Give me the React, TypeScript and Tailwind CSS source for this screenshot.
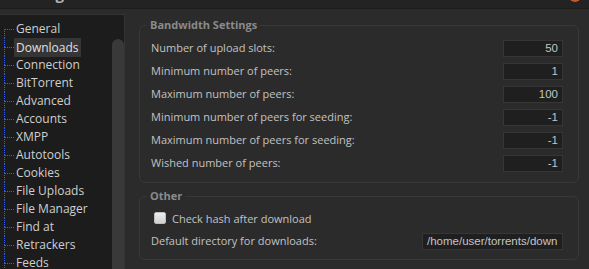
import React from 'react';

const MENU = [
  'General',
  'Downloads',
  'Connection',
  'BitTorrent',
  'Advanced',
  'Accounts',
  'XMPP',
  'Autotools',
  'Cookies',
  'File Uploads',
  'File Manager',
  'Find at',
  'Retrackers',
  'Feeds',
];

const BANDWIDTH = [
  { label: 'Number of upload slots:', value: '50' },
  { label: 'Minimum number of peers:', value: '1' },
  { label: 'Maximum number of peers:', value: '100' },
  { label: 'Minimum number of peers for seeding:', value: '-1' },
  { label: 'Maximum number of peers for seeding:', value: '-1' },
  { label: 'Wished number of peers:', value: '-1' },
];

const Field: React.FC<{ value: string; wide?: boolean }> = ({ value, wide }) => (
  <div
    className={
      wide
        ? "w-[141px] h-[17px] bg-[#1f1f1f] border border-[#363636] px-[4px] text-left overflow-hidden whitespace-nowrap leading-[15px] text-[11.5px] font-['Liberation_Sans',sans-serif] text-[#c4c4c4]"
        : "w-[60px] h-[17px] bg-[#1f1f1f] border border-[#363636] px-[4px] text-right overflow-hidden whitespace-nowrap leading-[15px] text-[11.5px] font-['Liberation_Sans',sans-serif] text-[#c4c4c4]"
    }
  >
    {value}
  </div>
);

const App: React.FC = () => {
  return (
    <div className="w-[589px] h-[269px] overflow-hidden bg-[#2b2b2b] font-['Open_Sans',sans-serif] flex flex-col">
      {/* Window title, mostly scrolled off */}
      <div className="h-[9px] shrink-0 bg-[#232323] border-b border-[#1c1c1c] overflow-hidden flex justify-between px-[11px]">
        <span className="-mt-[14px] text-[15px] leading-[16px] font-bold text-[#b5b5b5]">Settings</span>
        <span className="-mt-[10px] mr-[-3px] w-[12px] h-[12px] rounded-full bg-[#c9592c]"></span>
      </div>

      <div className="flex flex-1 min-h-0">
        {/* Side menu */}
        <div className="mt-[5px] w-[125px] shrink-0 bg-[#1c1c1c] border-t border-r border-[#333] flex">
          <ul className="flex-1 pt-[5px]">
            {MENU.map((item, i) => (
              <li key={item} className="h-[18px] flex items-stretch">
                <div className="ml-[4px] w-[10px] flex flex-col">
                  <div className={i === 0 ? 'h-1/2' : 'h-1/2 border-l border-dotted border-[#3560d8]'}></div>
                  <div className="h-1/2 border-l border-t border-dotted border-[#3560d8]"></div>
                </div>
                <span
                  className={
                    i === 1
                      ? 'self-center -my-[1px] px-[2px] h-[19px] leading-[19px] bg-[#353535] text-[12px] text-[#e0e0e0]'
                      : 'self-center px-[2px] leading-[18px] text-[12px] text-[#cfcfcf]'
                  }
                >
                  {item}
                </span>
              </li>
            ))}
          </ul>
          <div className="w-[12px] pt-[24px] flex">
            <div className="flex-1 bg-[#393939] rounded-t-[6px]"></div>
          </div>
        </div>

        {/* Settings panel */}
        <div className="flex-1 pl-[14px] pr-[10px] pt-[8px] text-[11px] text-[#c2c2c2]">
          <fieldset className="border border-[#383838] rounded-[6px]">
            <legend className="ml-[7px] px-[3px] leading-[16px] font-bold text-[#8a8a8a]">Bandwidth Settings</legend>
            <div className="pl-[11px] pr-[15px] pt-[7px] pb-[10px] flex flex-col gap-[6px]">
              {BANDWIDTH.map(row => (
                <div key={row.label} className="h-[17px] flex items-center justify-between">
                  <span>{row.label}</span>
                  <Field value={row.value} />
                </div>
              ))}
            </div>
          </fieldset>

          <fieldset className="mt-[5px] border border-[#383838] rounded-[6px]">
            <legend className="ml-[7px] px-[3px] leading-[16px] font-bold text-[#8a8a8a]">Other</legend>
            <div className="pl-[11px] pr-[15px] pt-[5px] pb-[9px] flex flex-col gap-[7px]">
              <div className="h-[17px] flex items-center">
                <div className="ml-[3px] w-[12px] h-[12px] rounded-[2px] border border-[#bdbdbd] bg-gradient-to-b from-[#eeeeee] to-[#cfcfcf]"></div>
                <span className="ml-[6px] mt-[3px]">Check hash after download</span>
              </div>
              <div className="h-[17px] flex items-center justify-between">
                <span>Default directory for downloads:</span>
                <Field value="/home/user/torrents/down" wide />
              </div>
            </div>
          </fieldset>
        </div>
      </div>
    </div>
  );
};

export default App;
